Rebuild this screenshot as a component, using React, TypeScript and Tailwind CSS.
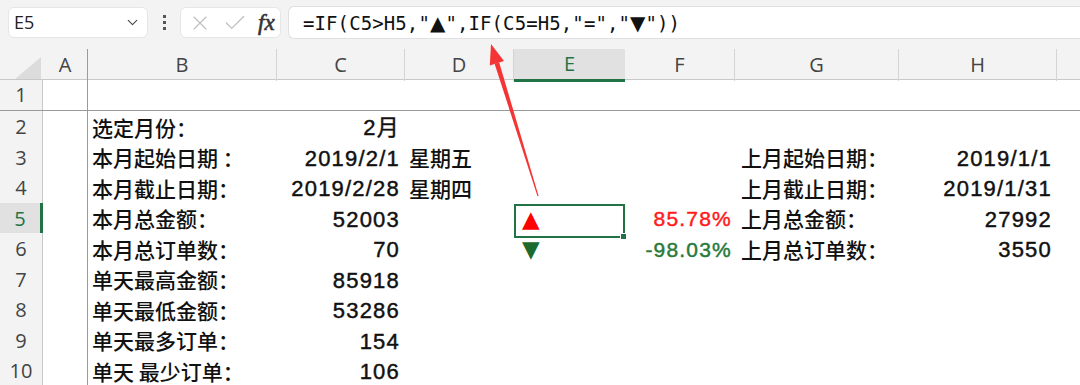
import { ChevronDown, X, Check } from 'lucide-react';

const GRID = 'grid grid-cols-[43px_45px_189px_128px_109px_111px_110px_164px_158px_1fr]';
const CJK = "font-['Noto_Sans_CJK_SC',sans-serif]";
const NUM =
  "font-['Liberation_Sans','Noto_Sans_CJK_SC',sans-serif] tracking-[1.2px] [-webkit-text-stroke:0.45px_currentColor]";

type Row = {
  n: number;
  b?: string;
  c?: string;
  d?: string;
  e?: { text: string; color: string };
  f?: { text: string; color: string };
  g?: string;
  h?: string;
};

// sheet content, rows 2-10
const rows: Row[] = [
  { n: 2, b: '选定月份：', c: '2月' },
  { n: 3, b: '本月起始日期 ：', c: '2019/2/1', d: '星期五', g: '上月起始日期：', h: '2019/1/1' },
  { n: 4, b: '本月截止日期：', c: '2019/2/28', d: '星期四', g: '上月截止日期：', h: '2019/1/31' },
  {
    n: 5,
    b: '本月总金额：',
    c: '52003',
    e: { text: '▲', color: 'text-[#ff0000]' },
    f: { text: '85.78%', color: 'text-[#ff1a1a]' },
    g: '上月总金额：',
    h: '27992',
  },
  {
    n: 6,
    b: '本月总订单数：',
    c: '70',
    e: { text: '▼', color: 'text-[#1d6b2c]' },
    f: { text: '-98.03%', color: 'text-[#2a7a3a]' },
    g: '上月总订单数：',
    h: '3550',
  },
  { n: 7, b: '单天最高金额：', c: '85918' },
  { n: 8, b: '单天最低金额：', c: '53286' },
  { n: 9, b: '单天最多订单：', c: '154' },
  { n: 10, b: '单天 最少订单：', c: '106' },
];

const letters = ['A', 'B', 'C', 'D', 'E', 'F', 'G', 'H'];

function Toolbar() {
  return (
    <div className="h-[49px] bg-[#f3f3f3] flex items-start pt-[7px] pl-[8px]">
      <div className="w-[140px] h-[31px] bg-white rounded-[6px] border border-[#e6e6e6] flex items-center justify-between pl-[5px] pr-[6px]">
        <span className="font-['Open_Sans',sans-serif] text-[18px] text-[#222]">E5</span>
        <ChevronDown size={17} strokeWidth={1.6} className="text-[#444]" />
      </div>
      <div className="w-[32px] h-[31px] flex flex-col items-center justify-center gap-[3px]">
        <div className="w-[3px] h-[3px] bg-[#555]" />
        <div className="w-[3px] h-[3px] bg-[#555]" />
        <div className="w-[3px] h-[3px] bg-[#555]" />
      </div>
      <div className="w-[101px] h-[31px] bg-white rounded-[6px] border border-[#e6e6e6] flex items-center pl-[7px] gap-[6px]">
        <X size={24} strokeWidth={1.1} className="text-[#bdbdbd]" />
        <Check size={26} strokeWidth={1.1} className="text-[#bdbdbd] ml-[4px]" />
        <span className="font-['Liberation_Serif',serif] italic text-[23px] leading-none text-[#333] ml-[4px] [-webkit-text-stroke:0.6px_currentColor]">
          fx
        </span>
      </div>
      <div className="ml-[7px] flex-1 h-[33px] -mt-[1px] bg-white rounded-l-[6px] border border-r-0 border-[#e0e0e0] flex items-center pl-[14px]">
        <span className="font-['DejaVu_Sans_Mono',monospace] text-[19px] text-[#111] tracking-[0.1px] whitespace-pre">
          =IF(C5&gt;H5,"
          <span className="font-['DejaVu_Sans',sans-serif] text-[20px]">▲</span>
          ",IF(C5=H5,"=","
          <span className="font-['DejaVu_Sans',sans-serif] text-[20px]">▼</span>
          "))
        </span>
      </div>
    </div>
  );
}

function ColumnHeader() {
  return (
    <div className={`${GRID} h-[31px] bg-[#f3f3f3] border-b border-[#c8c8c8]`}>
      <div className="relative">
        <div className="absolute right-[2px] bottom-[2px] w-0 h-0 border-l-[26px] border-l-transparent border-b-[22px] border-b-[#dcdcdc]" />
      </div>
      {letters.map((l) => {
        const sel = l === 'E';
        return (
          <div
            key={l}
            className={`flex items-center justify-center font-['Open_Sans',sans-serif] text-[20px] ${
              sel
                ? 'bg-[#e1e1e1] text-[#217346] border-b-[3px] border-[#217346] -mb-[1px]'
                : 'text-[#444] border-r border-[#d4d4d4]'
            } ${l === 'A' ? 'border-r-[#9a9a9a]' : ''}`}
          >
            {l}
          </div>
        );
      })}
      <div />
    </div>
  );
}

function RowNum({ n, sel }: { n: number; sel?: boolean }) {
  return (
    <div
      className={`flex items-center justify-center font-['Open_Sans',sans-serif] text-[20px] border-b border-[#e2e2e2] ${
        sel
          ? 'bg-[#e1e1e1] text-[#217346] border-r-[3px] border-r-[#217346]'
          : 'bg-[#f3f3f3] text-[#444] border-r border-r-[#c8c8c8]'
      }`}
    >
      {n}
    </div>
  );
}

function DataRow({ r }: { r: Row }) {
  const sel = r.n === 5;
  return (
    <div className={`${GRID} h-[30.5px]`}>
      <RowNum n={r.n} sel={sel} />
      <div className="border-r border-[#9a9a9a]" />
      <div className={`${CJK} font-medium text-[21px] text-[#111] pl-[4px] flex items-center whitespace-pre`}>
        {r.b}
      </div>
      <div className={`${NUM} text-[22px] text-[#111] pr-[5px] flex items-center justify-end`}>{r.c}</div>
      <div className={`${CJK} font-medium text-[21px] text-[#111] pl-[4px] flex items-center`}>{r.d}</div>
      <div className="relative flex items-center pl-[8px]">
        {sel && (
          <div className="absolute inset-x-0 top-[1px] bottom-[-2px] border-2 border-[#217346]">
            <div className="absolute right-[-4px] bottom-[-4px] w-[7px] h-[7px] bg-[#217346] border border-white" />
          </div>
        )}
        {r.e && (
          <span className={`font-['DejaVu_Sans',sans-serif] text-[23px] leading-none ${r.e.color}`}>{r.e.text}</span>
        )}
      </div>
      <div className={`${NUM} text-[21px] pr-[3px] flex items-center justify-end ${r.f?.color ?? ''}`}>
        {r.f?.text}
      </div>
      <div className={`${CJK} font-medium text-[21px] text-[#111] pl-[6px] flex items-center`}>{r.g}</div>
      <div className={`${NUM} text-[22px] text-[#111] pr-[5px] flex items-center justify-end`}>{r.h}</div>
      <div />
    </div>
  );
}

export default function App() {
  return (
    <div className="relative w-[1080px] h-[385px] overflow-hidden bg-white">
      <Toolbar />
      <ColumnHeader />
      {/* row 1 with the frozen-pane line under it */}
      <div className={`${GRID} h-[31px] border-b-[1.5px] border-[#9a9a9a]`}>
        <div className="bg-[#f3f3f3] border-r border-[#c8c8c8] flex items-center justify-center font-['Open_Sans',sans-serif] text-[20px] text-[#444]">
          1
        </div>
        <div className="border-r border-[#9a9a9a]" />
      </div>
      {rows.map((r) => (
        <DataRow key={r.n} r={r} />
      ))}

      {/* red annotation arrow */}
      <svg className="absolute left-0 top-0 pointer-events-none" width={1080} height={385}>
        <polygon points="537.4,196 538.6,196 499.2,62.4 494.6,63.8" fill="#f43535" />
        <polygon points="491,44 504,61 489.8,65.4" fill="#f43535" />
      </svg>
    </div>
  );
}
